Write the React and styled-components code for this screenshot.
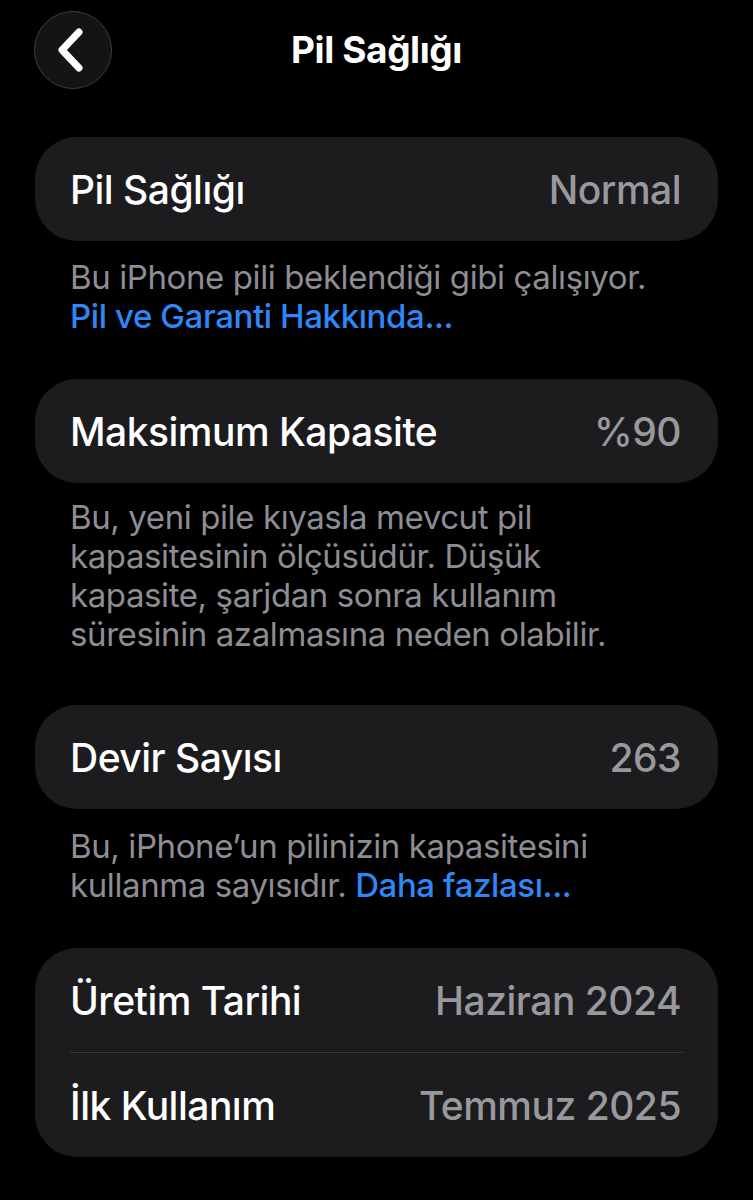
import React from "react";
import styled, { createGlobalStyle } from "styled-components";

const GlobalStyle = createGlobalStyle`
  body {
    margin: 0;
    background: #000;
    font-family: Inter, "Noto Sans", sans-serif;
    -webkit-font-smoothing: antialiased;
  }
`;

const Page = styled.div`
  background: #000;
  min-height: 1200px;
  padding: 11px 35px 0;
  box-sizing: border-box;
`;

const Header = styled.div`
  position: relative;
  display: flex;
  align-items: center;
  justify-content: center;
  height: 77px;
  margin-bottom: 49px;
`;

const BackButton = styled.button`
  position: absolute;
  left: -1px;
  top: 0;
  width: 78px;
  height: 78px;
  border-radius: 50%;
  background: #141414;
  border: 1px solid #3e3e40;
  display: flex;
  align-items: center;
  justify-content: center;
  padding: 0;
`;

const Title = styled.h1`
  margin: 0;
  color: #fff;
  font-size: 37px;
  font-weight: 700;
  letter-spacing: -0.4px;
`;

const Card = styled.div`
  background: #1c1c1e;
  border-radius: 42px;
  padding: 0 35px;
`;

const Row = styled.div`
  display: flex;
  align-items: center;
  justify-content: space-between;
  height: 104px;
  border-top: ${p => (p.divided ? "1px solid #3a3a3c" : "none")};
  font-size: 39px;
  letter-spacing: -0.5px;
`;

const Label = styled.span`
  color: #fff;
  font-weight: 500;
`;

const Value = styled.span`
  color: #98989e;
  font-weight: 500;
  margin-right: 2px;
`;

const Note = styled.p`
  margin: 0;
  padding: ${p => p.pad || "16px 35px 44px"};
  color: #8d8d93;
  font-size: 33px;
  line-height: 39px;
  letter-spacing: -0.4px;
`;

const Link = styled.span`
  color: #2f86f6;
  font-weight: 500;
`;

const Chevron = () => (
  <svg width="40" height="50" viewBox="0 0 40 50">
    <path
      d="M26 7 L9 25 L26 43"
      fill="none"
      stroke="#fff"
      strokeWidth="7"
      strokeLinecap="round"
      strokeLinejoin="round"
    />
  </svg>
);

export default function App() {
  return (
    <Page>
      <GlobalStyle />
      <Header>
        <BackButton>
          <Chevron />
        </BackButton>
        <Title>Pil Sağlığı</Title>
      </Header>

      <Card>
        <Row>
          <Label>Pil Sağlığı</Label>
          <Value>Normal</Value>
        </Row>
      </Card>
      <Note pad="17px 35px 43px">
        Bu iPhone pili beklendiği gibi çalışıyor.
        <br />
        <Link>Pil ve Garanti Hakkında...</Link>
      </Note>

      <Card>
        <Row>
          <Label>Maksimum Kapasite</Label>
          <Value>%90</Value>
        </Row>
      </Card>
      <Note pad="15px 35px 51px">
        Bu, yeni pile kıyasla mevcut pil
        <br />
        kapasitesinin ölçüsüdür. Düşük
        <br />
        kapasite, şarjdan sonra kullanım
        <br />
        süresinin azalmasına neden olabilir.
      </Note>

      <Card>
        <Row>
          <Label>Devir Sayısı</Label>
          <Value>263</Value>
        </Row>
      </Card>
      <Note pad="18px 35px 43px">
        Bu, iPhone’un pilinizin kapasitesini
        <br />
        kullanma sayısıdır. <Link>Daha fazlası...</Link>
      </Note>

      <Card>
        <Row>
          <Label>Üretim Tarihi</Label>
          <Value>Haziran 2024</Value>
        </Row>
        <Row divided>
          <Label>İlk Kullanım</Label>
          <Value>Temmuz 2025</Value>
        </Row>
      </Card>
    </Page>
  );
}
